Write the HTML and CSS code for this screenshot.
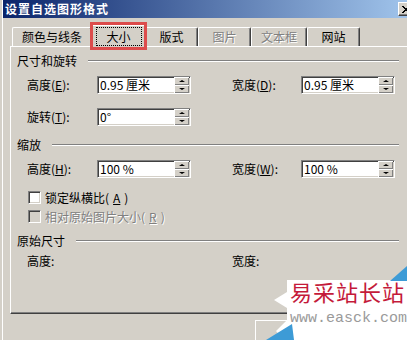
FILE: index.html
```html
<!DOCTYPE html>
<html lang="zh-CN">
    <head>
        <meta charset="utf-8">
        <title>设置自选图形格式</title>
        <link rel="stylesheet" href="styles.css">
    </head>
    <body>
        <div class="window">
            <div class="titlebar">
                <span class="title">设置自选图形格式</span>
                <span class="close">
                    <svg width="8" height="7" viewBox="0 0 8 7"><path d="M0,0 L7,7 M1,0 L8,7 M7,0 L0,7 M8,0 L1,7" stroke="#000" stroke-width="1"/></svg>
                </span>
            </div>

            <div class="tabs">
                <span class="tab">颜色与线条</span>
                <span class="tab active"><span class="focus">大小</span><span class="mark"></span></span>
                <span class="tab">版式</span>
                <span class="tab off">图片</span>
                <span class="tab off">文本框</span>
                <span class="tab">网站</span>
            </div>

            <div class="panel">
                <div class="legend">尺寸和旋转</div>
                <div class="row first">
                    <span class="lbl">高度(<u>E</u>):</span>
                    <span class="spin"><span class="val">0.95 厘米</span><span class="arrows"><i class="up"></i><i class="down"></i></span></span>
                    <span class="lbl lbl2">宽度(<u>D</u>):</span>
                    <span class="spin"><span class="val">0.95 厘米</span><span class="arrows"><i class="up"></i><i class="down"></i></span></span>
                </div>
                <div class="row second">
                    <span class="lbl">旋转(<u>T</u>):</span>
                    <span class="spin"><span class="val">0°</span><span class="arrows"><i class="up"></i><i class="down"></i></span></span>
                </div>

                <div class="legend scale">缩放</div>
                <div class="row first">
                    <span class="lbl">高度(<u>H</u>):</span>
                    <span class="spin"><span class="val">100 %</span><span class="arrows"><i class="up"></i><i class="down"></i></span></span>
                    <span class="lbl lbl2">宽度(<u>W</u>):</span>
                    <span class="spin"><span class="val">100 %</span><span class="arrows"><i class="up"></i><i class="down"></i></span></span>
                </div>
                <div class="check lock"><span class="box"></span>锁定纵横比(<u>A</u>)</div>
                <div class="check off"><span class="box"></span>相对原始图片大小(<u>R</u>)</div>

                <div class="legend orig">原始尺寸</div>
                <div class="row plain">
                    <span class="lbl">高度:</span>
                    <span class="gapcol"></span>
                    <span class="lbl lbl2">宽度:</span>
                </div>
            </div>

            <!-- dialog buttons, hidden under the watermark -->
            <div class="buttons">
                <span class="btn"></span>
                <span class="btn"></span>
            </div>
        </div>

        <div class="watermark">
            <svg width="145" height="76" viewBox="0 0 145 76">
                <polygon points="25,16 130,16 145,8 145,76 22,76 14,67 25,56 25,44 12,36 25,28" fill="#fff"/>
                <polygon points="128,17 145,2 145,17" fill="#3d9bd6"/>
                <polygon points="4,76 30,60 32,76" fill="#3d9bd6"/>
            </svg>
            <span class="wm-name">易采站长站</span>
            <span class="wm-url">www.easck.com</span>
        </div>
    </body>
</html>
```

FILE: styles.css
```css
html, body {
    margin:0;
}

body {
    width:407px;
    height:340px;
    overflow:hidden;
    position:relative;
    background:#d4d0c8;
    font-family:"Noto Sans CJK SC", sans-serif;
    font-size:12px;
    line-height:14px;
    color:#000;
}

u {
    text-decoration:underline;
}

.window {
    margin-left:2px;
    border-left:1px solid #fff;
    width:420px;
    height:340px;
}

.titlebar {
    height:18px;
    display:flex;
    align-items:center;
    justify-content:space-between;
    padding:0 9px 0 2px;
    background:linear-gradient(to right, #0a246a, #a6caf0);
}

.title {
    color:#fff;
    font-weight:bold;
    letter-spacing:1px;
}

.close {
    width:16px;
    height:14px;
    box-sizing:border-box;
    display:flex;
    align-items:center;
    justify-content:center;
    background:#d4d0c8;
    border:1px solid;
    border-color:#fff #404040 #404040 #fff;
    box-shadow:inset -1px -1px #808080;
}

/* tabs */
.tabs {
    display:flex;
    align-items:flex-end;
    height:21px;
    margin-top:7px;
    padding-left:9px;
}

.tab {
    min-width:53px;
    height:19px;
    padding:0 9px;
    box-sizing:border-box;
    border:1px solid;
    border-bottom:none;
    border-color:#fff #404040 transparent #fff;
    border-radius:2px 2px 0 0;
    box-shadow:inset -1px 0 #808080;
    text-align:center;
    line-height:18px;
}

.tab.off {
    color:#808080;
    text-shadow:1px 1px #fff;
}

.tab.active {
    position:relative;
    z-index:1;
    min-width:57px;
    height:22px;
    margin:0 -2px -1px;
    padding:1px 0 0;
    background:#d4d0c8;
}

.focus {
    display:inline-block;
    padding:0 10px;
    line-height:17px;
    border:1px dotted #000;
}

.mark {
    position:absolute;
    left:-1px;
    top:-4px;
    width:57px;
    height:28px;
    box-sizing:border-box;
    border:3px solid #dc4c4c;
}

/* panel */
.panel {
    margin-left:7px;
    width:402px;
    height:268px;
    box-sizing:border-box;
    border:1px solid;
    border-color:#fff #404040 #404040 #fff;
    box-shadow:inset -1px -1px #808080;
    padding:7px 12px 0 6px;
}

.legend {
    display:flex;
    align-items:center;
    height:14px;
}

.legend::after {
    content:"";
    flex:1;
    margin-left:11px;
    border-top:1px solid #808080;
    border-bottom:1px solid #fff;
}

.legend.scale {
    margin-top:12px;
}

.legend.orig {
    margin-top:11px;
}

.row {
    display:flex;
    align-items:center;
    height:18px;
    margin-left:10px;
}

.row.first {
    margin-top:8px;
}

.row.second {
    margin-top:14px;
}

.row.plain {
    margin-top:6px;
    height:14px;
}

.lbl {
    width:70px;
}

.lbl2 {
    width:69px;
    margin-left:41px;
}

.gapcol {
    width:94px;
}

.spin {
    width:94px;
    height:18px;
    box-sizing:border-box;
    display:flex;
    align-items:center;
    justify-content:space-between;
    background:#fff;
    border:1px solid;
    border-color:#808080 #fff #fff #808080;
    box-shadow:inset 1px 1px #404040, inset -1px -1px #d4d0c8;
    padding:1px 1px 1px 2px;
}

.val {
    line-height:14px;
}

.arrows {
    display:flex;
    flex-direction:column;
    width:15px;
    height:16px;
}

.arrows i {
    flex:1;
    position:relative;
    background:#d4d0c8;
    box-shadow:inset 1px 1px #fff, inset -1px -1px #808080;
}

.arrows i::after {
    content:"";
    position:absolute;
    left:5px;
    width:0;
    height:0;
    border-left:3px solid transparent;
    border-right:3px solid transparent;
}

.arrows .up::after {
    top:3px;
    border-bottom:2px solid #000;
}

.arrows .down::after {
    top:3px;
    border-top:2px solid #000;
}

.check {
    display:flex;
    align-items:center;
    gap:4px;
    height:13px;
    margin-left:11px;
}

.check.lock {
    margin-top:13px;
}

.check.off {
    margin-top:6px;
    color:#808080;
    text-shadow:1px 1px #fff;
}

.box {
    width:13px;
    height:13px;
    box-sizing:border-box;
    background:#fff;
    border:1px solid;
    border-color:#808080 #fff #fff #808080;
    box-shadow:inset 1px 1px #404040, inset -1px -1px #d4d0c8;
}

.check.off .box {
    background:#d4d0c8;
}

/* dialog buttons */
.buttons {
    display:flex;
    gap:6px;
    margin-top:6px;
    padding-left:252px;
}

.btn {
    width:75px;
    height:23px;
    box-sizing:border-box;
    border:1px solid;
    border-color:#fff #404040 #404040 #fff;
    box-shadow:inset -1px -1px #808080;
}

/* site watermark */
.watermark {
    position:absolute;
    left:262px;
    top:264px;
    width:145px;
    height:76px;
}

.watermark svg {
    position:absolute;
    left:0;
    top:0;
}

.wm-name {
    position:absolute;
    left:28px;
    top:14px;
    font-size:22px;
    line-height:26px;
    letter-spacing:1px;
    color:#c41a3a;
    white-space:nowrap;
}

.wm-url {
    position:absolute;
    left:28px;
    top:46px;
    font-family:"Liberation Mono", monospace;
    font-size:15px;
    line-height:18px;
    color:#9a9a9a;
    white-space:nowrap;
}
```
